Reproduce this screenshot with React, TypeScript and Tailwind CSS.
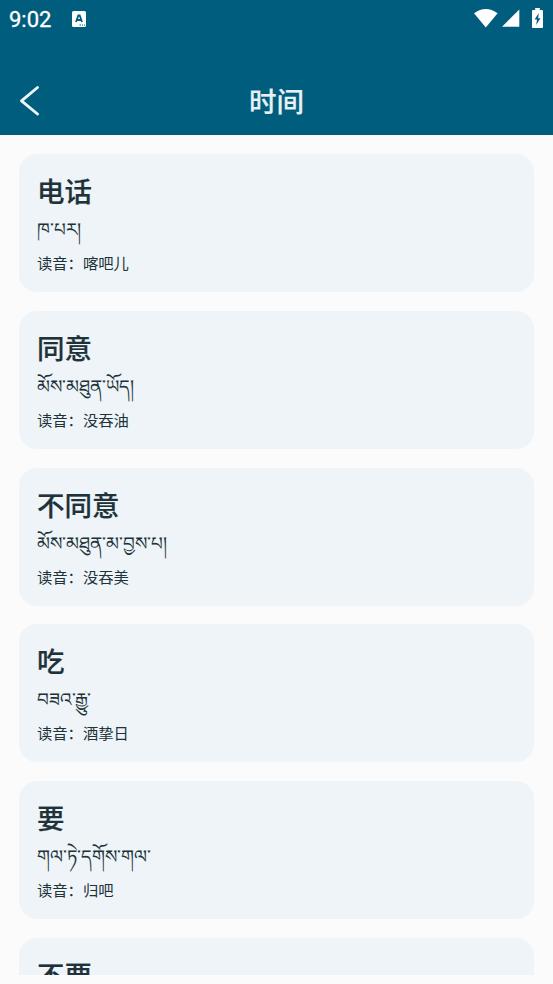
const words = [
  { id: 1, zh: "电话", bo: "ཁ་པར།", sound: "喀吧儿" },
  { id: 2, zh: "同意", bo: "མོས་མཐུན་ཡོད།", sound: "没吞油" },
  { id: 3, zh: "不同意", bo: "མོས་མཐུན་མ་བྱས་པ།", sound: "没吞美" },
  { id: 4, zh: "吃", bo: "བཟའ་རྒྱུ་", sound: "酒挚日" },
  { id: 5, zh: "要", bo: "གལ་ཏེ་དགོས་གལ་", sound: "归吧" },
  { id: 6, zh: "不要" },
]

const StatusBar = () => {
  return (
    <div className="h-9 pl-[9px] pr-2.5 flex items-center justify-between text-white">
      <div className="flex items-center gap-5 pt-0.5">
        <span className="font-['Roboto'] text-[22px] leading-none w-[43px] pt-0.5 [-webkit-text-stroke:0.3px]">9:02</span>
        <svg width="14" height="16" viewBox="0 0 14 16">
          <rect width="14" height="16" rx="1.5" fill="white" />
          <path d="M4 11 6.3 4.5H7.7L10 11M5 9H9" fill="none" stroke="#005d7d" strokeWidth="1.8" />
          <path d="M7.5 14H9M10 14H11M12 14H13" stroke="#005d7d" strokeWidth="1" />
        </svg>
      </div>
      <div className="flex items-center">
        <svg width="24" height="19" viewBox="0 0 24 19">
          <path d="M0 4.3Q11.8-4.3 23.6 4.3L11.8 18.5Z" fill="white" />
        </svg>
        <svg className="ml-1" width="18" height="18" viewBox="0 0 18 18">
          <path d="M17.3.5V17.8H0Z" fill="white" />
        </svg>
        <svg className="ml-3" width="11" height="20" viewBox="0 0 11 20">
          <path d="M3.2 0H7.8V2H10Q11 2 11 3V19Q11 20 10 20H1Q0 20 0 19V3Q0 2 1 2H3.2Z" fill="white" />
          <path d="M6.8 5 2.6 11.6H5L4.2 17 8.5 10.2H6.1Z" fill="#005d7d" />
        </svg>
      </div>
    </div>
  )
}

const Header = () => {
  return (
    <div className="h-[99px] relative flex items-center justify-center">
      <button className="absolute left-[19px] top-[49px]">
        <svg width="21" height="32" viewBox="0 0 21 32">
          <path d="M18.5 2.5 2.5 15.8 18.5 29" fill="none" stroke="#eef5f8" strokeWidth="2.9" strokeLinecap="round" strokeLinejoin="round" />
        </svg>
      </button>
      <h1 className="pt-[28px] text-[27.5px] leading-9 font-medium text-[#e8f0f4] [-webkit-text-stroke:0.2px]">时间</h1>
    </div>
  )
}

const App = () => {
  return (
    <div className="h-[984px] w-[553px] bg-[#fbfbfb] flex flex-col overflow-hidden pb-[9px] font-['Noto_Sans_CJK_SC',sans-serif] text-[#203239]">
      <div className="bg-[#005d7d] h-[135px] shrink-0">
        <StatusBar />
        <Header />
      </div>
      <div className="flex-1 overflow-hidden px-[19px] pt-[19px] flex flex-col gap-[18.8px]">
        {words.map((word) => (
          <div key={word.id} className="h-[138px] shrink-0 w-[515px] rounded-[18px] bg-[#eef4f7] pl-[18px] pt-4">
            <h2 className="text-[27.5px] leading-10 font-medium whitespace-nowrap [-webkit-text-stroke:0.2px]">{word.zh}</h2>
            {word.bo && <p className="mt-0.5 h-[31px] text-[18.4px] leading-8 whitespace-nowrap" lang="bo">{word.bo}</p>}
            {word.sound && <p className="text-[15.3px] leading-[38px] whitespace-nowrap">读音：{word.sound}</p>}
          </div>
        ))}
      </div>
    </div>
  )
}

export default App
